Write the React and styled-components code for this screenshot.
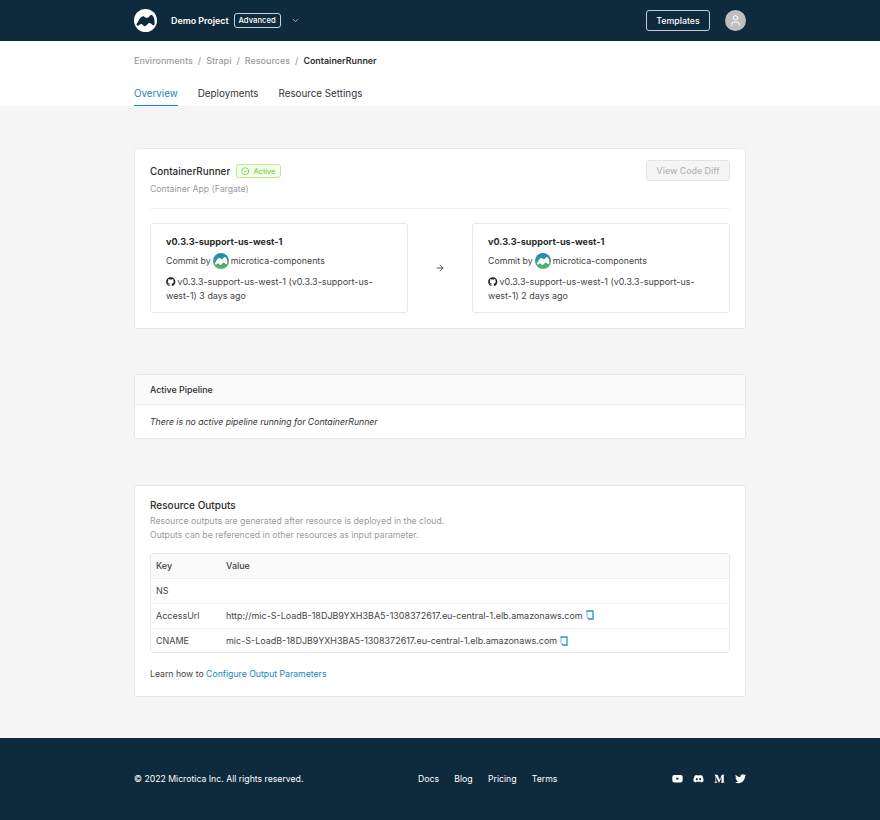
import React from "react";
import styled, { createGlobalStyle } from "styled-components";
import { FaYoutube, FaDiscord, FaTwitter, FaGithub, FaMediumM } from "react-icons/fa";
import { ChevronDown, CircleCheck, ArrowRight, User } from "lucide-react";

const Global = createGlobalStyle`
  html, body { margin: 0; padding: 0; background: #f5f5f5; }
  body { font-family: Inter, "Liberation Sans", sans-serif; color: #2b2b2b; -webkit-font-smoothing: antialiased; }
  * { box-sizing: border-box; }
`;

const Page = styled.div`
  width: 880px; height: 820px; display: flex; flex-direction: column; overflow: hidden;
`;
const Inner = styled.div`
  width: 612px; margin: 0 auto; display: flex; align-items: center;
`;
const Header = styled.header`
  height: 41px; background: #0f2a3d; flex: none; display: flex; align-items: center;
`;
const HeaderInner = styled(Inner)`justify-content: space-between;`;
const Left = styled.div`display: flex; align-items: center;`;
const Logo = styled.svg`width: 23px; height: 23px; display: block; margin-right: 14px;`;
const Project = styled.span`color: #fff; font-size: 8.9px; font-weight: 600; margin-right: 5px;`;
const Plan = styled.span`
  color: #fff; font-size: 7.7px; font-weight: 500; border: 1px solid #c8d0d6; border-radius: 3px;
  height: 15px; width: 47px; display: inline-flex; align-items: center; justify-content: center; margin-right: 10px;
`;
const Chevron = styled(ChevronDown)`color: #cfd6db; width: 9px; height: 9px;`;
const Right = styled.div`display: flex; align-items: center; gap: 15px;`;
const Templates = styled.button`
  width: 64px; height: 21px; background: transparent; color: #fff; border: 1px solid #c5cdd3; border-radius: 3px;
  font: 500 8.8px Inter, sans-serif; padding: 0;
`;
const Avatar = styled.div`
  width: 21px; height: 21px; border-radius: 50%; background: #bfbfbf; color: #fff;
  display: flex; align-items: center; justify-content: center;
`;

const SubNav = styled.div`height: 65px; background: #fff; flex: none;`;
const SubInner = styled.div`
  width: 612px; margin: 0 auto; display: flex; flex-direction: column; height: 100%;
`;
const Crumbs = styled.div`
  display: flex; gap: 5px; font-size: 9px; font-weight: 500; color: #9b9b9b; padding-top: 14px; line-height: 12px;
`;
const CrumbNow = styled.span`color: #2f2f2f; font-weight: 600; font-size: 8.9px;`;
const Tabs = styled.nav`display: flex; gap: 20px; margin-top: 20px;`;
const Tab = styled.a`
  font-size: 9.8px; line-height: 13px; font-weight: 400; color: ${p => p.$on ? "#1a85c0" : "#333"};
  height: 19px; border-bottom: ${p => p.$on ? "1px solid #1a85c0" : "none"};
`;

const Main = styled.main`
  flex: 1; width: 612px; margin: 0 auto; padding-top: 42px; display: flex; flex-direction: column;
`;
const Card = styled.section`
  background: #fff; border: 1px solid #e8e8e8; border-radius: 3px; flex: none;
`;
const TopCard = styled(Card)`height: 181px; padding: 11px 15px 15px; display: flex; flex-direction: column;`;
const TopRow = styled.div`display: flex; justify-content: space-between; align-items: flex-start; height: 50px; border-bottom: 1px solid #f2f2f2;`;
const TitleRow = styled.div`display: flex; align-items: center; gap: 6px; margin-top: 4px;`;
const Title = styled.h1`margin: 0; font-size: 9.9px; line-height: 14px; font-weight: 500; color: #2b2b2b;`;
const Badge = styled.span`
  display: inline-flex; align-items: center; gap: 4px; height: 14px; width: 45px; padding: 0 0 0 4px; border: 1px solid #b7eb8f;
  background: #f6ffed; border-radius: 3px; color: #5cc52a; font-size: 7.3px; font-weight: 400;
`;
const BadgeIcon = styled(CircleCheck)`width: 8.500px; height: 8.500px;`;
const Sub = styled.div`font-size: 8.7px; line-height: 12px; color: #9b9b9b; margin-top: 5px;`;
const DiffButton = styled.button`
  width: 84px; height: 21px; background: #f5f5f5; border: 1px solid #e4e4e4; border-radius: 3px; color: #b5b5b5;
  font: 500 8.9px Inter, sans-serif; padding: 0;
`;
const Compare = styled.div`display: grid; grid-template-columns: 258px 1fr 258px; align-items: center; margin-top: 14px;`;
const Arrow = styled(ArrowRight)`width: 10px; height: 10px; justify-self: center; color: #333;`;
const Commit = styled.div`
  height: 90px; border: 1px solid #e8e8e8; border-radius: 3px; padding: 11px 15px 0; font-size: 8.95px; color: #444;
`;
const Version = styled.div`font-weight: 700; font-size: 9.1px; line-height: 13px; color: #2b2b2b;`;
const By = styled.div`display: flex; align-items: center; gap: 2px; height: 16px; margin-top: 5px; line-height: 16px; font-size: 8.8px;`;
const Mini = styled.svg`width: 16px; height: 16px; flex: none;`;
const Detail = styled.div`margin-top: 6px; line-height: 14px;`;
const Gh = styled(FaGithub)`width: 9.500px; height: 9.500px; color: #222; vertical-align: -1.500px; margin-right: 2px;`;

const PipeCard = styled(Card)`margin-top: 45px; height: 65px;`;
const PipeHead = styled.div`
  height: 30px; background: #fafafa; border-bottom: 1px solid #eee; padding: 0 15px; display: flex; align-items: center;
  font-size: 8.9px; font-weight: 500; color: #2b2b2b; border-radius: 3px 3px 0 0;
`;
const PipeBody = styled.div`padding: 0 15px; height: 33px; display: flex; align-items: center; font-size: 8.7px; font-style: italic; color: #333;`;

const OutCard = styled(Card)`margin-top: 46px; height: 212px; padding: 13px 15px 0;`;
const OutTitle = styled.h2`margin: 0; font-size: 10px; line-height: 13px; font-weight: 500; color: #2b2b2b;`;
const Help = styled.p`margin: 2px 0 0; font-size: 8.7px; line-height: 14px; color: #9b9b9b;`;
const Table = styled.div`margin-top: 11px; border: 1px solid #e8e8e8; border-radius: 3px; height: 100px; overflow: hidden;`;
const Row = styled.div`
  display: grid; grid-template-columns: 70px 1fr; padding: 0 0 2px 5px; height: 25px; align-items: center; font-size: 8.97px; color: #444;
  background: ${p => p.$head ? "#fafafa" : "#fff"}; font-weight: ${p => p.$head ? 500 : 400};
  border-bottom: ${p => p.$last ? "none" : "1px solid #eee"};
`;
const Val = styled.span`display: flex; align-items: center; gap: 3px;`;
const Copy = styled.svg`width: 8px; height: 10px; flex: none;`;
const Learn = styled.p`margin: 15px 0 0; font-size: 8.7px; line-height: 12px; color: #444;`;
const Link = styled.a`color: #1a85c0;`;

const Footer = styled.footer`height: 82px; background: #0f2a3d; flex: none; display: flex; align-items: center; padding-bottom: 1px;`;
const FootInner = styled(Inner)`color: #fff; font-size: 8.7px; font-weight: 400;`;
const FootCopy = styled.span`width: 284px; flex: none;`;
const FootLinks = styled.nav`display: flex; gap: 15.300px; margin-right: auto;`;
const Socials = styled.div`display: flex; align-items: center; gap: 10px;`;
const Social = styled.span`display: flex; width: 11px; justify-content: center; font-size: 11.500px; color: #fff;`;

const wavePath = "M2.600 15.800C3.800 14.600 4.600 12.400 5.600 10.800C6.800 8.800 8.600 7.200 10.400 7.800C11.800 8.300 12.400 9.800 14 9.200C15.800 8.400 16.600 5.800 18.400 6.200C20.400 6.800 21.700 10.600 21.500 14.800C21.400 17 20.200 17.400 19 16.400C17.800 15.400 16.800 14.200 15.200 14.800C13.600 15.500 13.200 18 11.200 17.900C9.400 17.800 9 15.300 7.200 15.700C5.700 16.100 4.800 17.900 3.500 17.300C3 17 2.700 16.500 2.600 15.800Z";

const MiniLogo = () => (
  <Mini viewBox="0 0 24 24">
    <defs>
      <linearGradient id="mg" x1="0" y1="0" x2="0" y2="1">
        <stop offset="0" stopColor="#1a85c0" />
        <stop offset="1" stopColor="#5cb85c" />
      </linearGradient>
    </defs>
    <circle cx="12" cy="12" r="12" fill="url(#mg)" />
    <path fill="#fff" d={wavePath} />
  </Mini>
);

const CopyIcon = () => (
  <Copy viewBox="0 0 8 10" fill="none">
    <path d="M1 1v6.800" stroke="#a8d2ea" strokeWidth="1.500" />
    <path d="M.500 1H7V9H3L1.800 7.800" stroke="#2a8fc9" strokeWidth="1.300" />
  </Copy>
);

const CommitCard = ({ age }) => (
  <Commit>
    <Version>v0.3.3-support-us-west-1</Version>
    <By>Commit by <MiniLogo /> microtica-components</By>
    <Detail><Gh />{`v0.3.3-support-us-west-1 (v0.3.3-support-us-west-1) ${age}`}</Detail>
  </Commit>
);

export default function App() {
  return (
    <Page>
      <Global />
      <Header>
        <HeaderInner>
          <Left>
            <Logo viewBox="0 0 24 24">
              <circle cx="12" cy="12" r="12" fill="#fff" />
              <path fill="#0f2a3d" d={wavePath} />
            </Logo>
            <Project>Demo Project</Project>
            <Plan>Advanced</Plan>
            <Chevron />
          </Left>
          <Right>
            <Templates>Templates</Templates>
            <Avatar><User size={13} strokeWidth={1.800} /></Avatar>
          </Right>
        </HeaderInner>
      </Header>
      <SubNav>
        <SubInner>
          <Crumbs>
            <span>Environments</span><span>/</span><span>Strapi</span><span>/</span><span>Resources</span><span>/</span>
            <CrumbNow>ContainerRunner</CrumbNow>
          </Crumbs>
          <Tabs>
            <Tab $on>Overview</Tab>
            <Tab>Deployments</Tab>
            <Tab>Resource Settings</Tab>
          </Tabs>
        </SubInner>
      </SubNav>
      <Main>
        <TopCard>
          <TopRow>
            <div>
              <TitleRow>
                <Title>ContainerRunner</Title>
                <Badge><BadgeIcon />Active</Badge>
              </TitleRow>
              <Sub>Container App (Fargate)</Sub>
            </div>
            <DiffButton disabled>View Code Diff</DiffButton>
          </TopRow>
          <Compare>
            <CommitCard age="3 days ago" />
            <Arrow />
            <CommitCard age="2 days ago" />
          </Compare>
        </TopCard>
        <PipeCard>
          <PipeHead>Active Pipeline</PipeHead>
          <PipeBody>There is no active pipeline running for ContainerRunner</PipeBody>
        </PipeCard>
        <OutCard>
          <OutTitle>Resource Outputs</OutTitle>
          <Help>Resource outputs are generated after resource is deployed in the cloud.<br />Outputs can be referenced in other resources as input parameter.</Help>
          <Table>
            <Row $head><span>Key</span><span>Value</span></Row>
            <Row><span>NS</span><span /></Row>
            <Row><span>AccessUrl</span><Val>http://mic-S-LoadB-18DJB9YXH3BA5-1308372617.eu-central-1.elb.amazonaws.com <CopyIcon /></Val></Row>
            <Row $last><span>CNAME</span><Val>mic-S-LoadB-18DJB9YXH3BA5-1308372617.eu-central-1.elb.amazonaws.com <CopyIcon /></Val></Row>
          </Table>
          <Learn>Learn how to <Link>Configure Output Parameters</Link></Learn>
        </OutCard>
      </Main>
      <Footer>
        <FootInner>
          <FootCopy>© 2022 Microtica Inc. All rights reserved.</FootCopy>
          <FootLinks><span>Docs</span><span>Blog</span><span>Pricing</span><span>Terms</span></FootLinks>
          <Socials>
            <Social><FaYoutube /></Social>
            <Social><FaDiscord /></Social>
            <Social><FaMediumM /></Social>
            <Social><FaTwitter /></Social>
          </Socials>
        </FootInner>
      </Footer>
    </Page>
  );
}
